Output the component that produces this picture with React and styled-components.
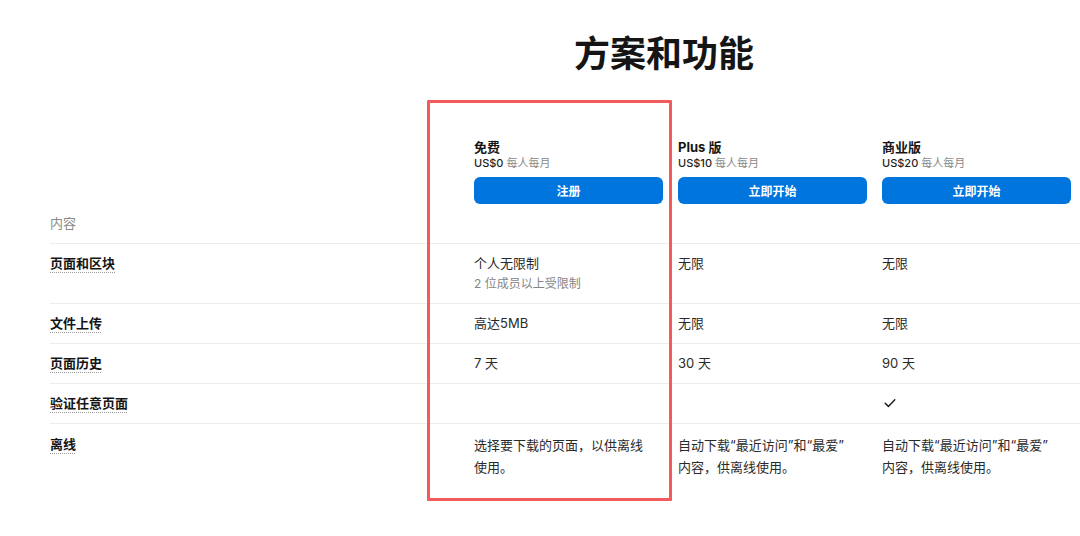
import styled, { createGlobalStyle } from "styled-components";

const GlobalStyle = createGlobalStyle`
  html, body {
    margin: 0;
    padding: 0;
    background: #ffffff;
    overflow: hidden;
  }
  body {
    font-family: "Inter", "Noto Sans CJK SC", sans-serif;
    color: #1f1f1f;
    -webkit-font-smoothing: antialiased;
  }
`;

const plans = [
  { name: "免费", price: "US$0", cta: "注册" },
  { name: "Plus 版", price: "US$10", cta: "立即开始" },
  { name: "商业版", price: "US$20", cta: "立即开始" },
];

const rows = [
  {
    label: "页面和区块",
    cells: [
      { text: "个人无限制", note: "2 位成员以上受限制" },
      { text: "无限" },
      { text: "无限" },
    ],
  },
  {
    label: "文件上传",
    cells: [{ text: "高达5MB" }, { text: "无限" }, { text: "无限" }],
  },
  {
    label: "页面历史",
    cells: [{ text: "7 天" }, { text: "30 天" }, { text: "90 天" }],
  },
  {
    label: "验证任意页面",
    cells: [{}, {}, { check: true }],
  },
  {
    label: "离线",
    tall: true,
    cells: [
      { text: "选择要下载的页面，以供离线使用。" },
      { text: "自动下载“最近访问”和“最爱”内容，供离线使用。" },
      { text: "自动下载“最近访问”和“最爱”内容，供离线使用。" },
    ],
  },
];

const CheckIcon = () => (
  <svg width="14" height="14" viewBox="0 0 14 14" fill="none">
    <path
      d="M2.2 7.3 L5.4 10.4 L11.8 3.8"
      stroke="#1f1f1f"
      strokeWidth="1.5"
      strokeLinecap="round"
      strokeLinejoin="round"
    />
  </svg>
);

const App = () => {
  return (
    <Page>
      <GlobalStyle />
      <Title>方案和功能</Title>
      <Table>
        <HeaderRow>
          <SectionLabel>内容</SectionLabel>
          {plans.map((p) => (
            <PlanHead key={p.name}>
              <PlanName>{p.name}</PlanName>
              <PlanPrice>
                {p.price} <span>每人每月</span>
              </PlanPrice>
              <Button>{p.cta}</Button>
            </PlanHead>
          ))}
        </HeaderRow>
        {rows.map((r) => (
          <Row key={r.label} $tall={r.tall}>
            <Cell>
              <Label>{r.label}</Label>
            </Cell>
            {r.cells.map((c, i) => (
              <Cell key={i}>
                {c.text && <Value $tall={r.tall}>{c.text}</Value>}
                {c.note && <Note>{c.note}</Note>}
                {c.check && (
                  <CheckWrap>
                    <CheckIcon />
                  </CheckWrap>
                )}
              </Cell>
            ))}
          </Row>
        ))}
      </Table>
      <Highlight />
    </Page>
  );
};

const Page = styled.div`
  position: relative;
  width: 1328px;
  min-height: 536px;
  padding-top: 32px;
  box-sizing: border-box;
`;

const Title = styled.h1`
  margin: 0;
  text-align: center;
  font-size: 36px;
  line-height: 44px;
  font-weight: 700;
  color: #151515;
`;

const Table = styled.div`
  padding-left: 50px;
`;

const grid = `
  display: grid;
  grid-template-columns: 424px 204px 204px 204px;
`;

const HeaderRow = styled.div`
  ${grid}
  align-items: end;
  padding-top: 63px;
`;

const SectionLabel = styled.div`
  font-size: 13px;
  line-height: 20px;
  color: #8a8a8a;
  padding-bottom: 10px;
`;

const PlanHead = styled.div`
  display: flex;
  flex-direction: column;
  padding-right: 15px;
  padding-bottom: 39px;
`;

const PlanName = styled.div`
  font-size: 13px;
  line-height: 17px;
  font-weight: 700;
  color: #151515;
`;

const PlanPrice = styled.div`
  font-size: 11px;
  line-height: 14px;
  font-weight: 500;
  color: #1f1f1f;

  span {
    color: #8a8a8a;
    font-weight: 400;
  }
`;

const Button = styled.button`
  margin-top: 7px;
  height: 27px;
  width: 100%;
  border: none;
  border-radius: 6px;
  background: #0075de;
  color: #ffffff;
  font-family: inherit;
  font-size: 12px;
  font-weight: 600;
  cursor: pointer;
`;

const Row = styled.div`
  ${grid}
  border-top: 1px solid #ededed;
  padding: ${(p) => (p.$tall ? "10px 0 14px" : "9px 0 10px")};
  &:first-of-type {
    padding: 10px 0 7px;
  }
`;

const Cell = styled.div`
  padding-right: 15px;
  min-height: 20px;
  font-size: 13px;
  line-height: 20px;
`;

const Label = styled.span`
  font-size: 13px;
  line-height: 20px;
  font-weight: 700;
  color: #151515;
  text-decoration: underline dotted #9a9a9a;
  text-decoration-thickness: 1px;
  text-underline-offset: 4px;
`;

const Value = styled.div`
  font-size: 13px;
  line-height: ${(p) => (p.$tall ? "22px" : "20px")};
  color: #2a2a2a;
  max-width: 176px;
  line-break: anywhere;
`;

const Note = styled.div`
  margin-top: 2px;
  font-size: 12px;
  line-height: 18px;
  color: #858585;
`;

const CheckWrap = styled.div`
  height: 20px;
  display: flex;
  align-items: center;
  padding-left: 1px;
`;

const Highlight = styled.div`
  position: absolute;
  left: 427px;
  top: 100px;
  width: 245px;
  height: 401px;
  box-sizing: border-box;
  border: 3px solid #f35b5b;
  border-radius: 1px;
  pointer-events: none;
`;

export default App;
